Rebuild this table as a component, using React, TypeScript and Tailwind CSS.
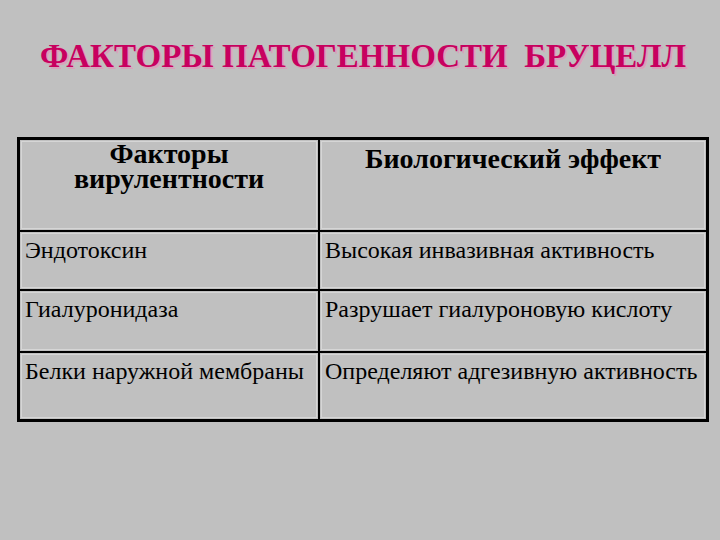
const rows: [string, string][] = [
  ["Эндотоксин", "Высокая инвазивная активность"],
  ["Гиалуронидаза", "Разрушает гиалуроновую кислоту"],
  ["Белки наружной мембраны", "Определяют адгезивную активность"],
];

const heights = ["h-[59px]", "h-[62px]", "h-[66px]"];

function Cell({ children, className = "" }: { children: React.ReactNode; className?: string }) {
  return (
    <div className={"p-[1px] " + className}>
      <div className="h-full border border-[#d6d6d6]">{children}</div>
    </div>
  );
}

export default function App() {
  return (
    <div className="w-[720px] h-[540px] bg-[#c0c0c0] font-[family-name:Liberation_Serif,DejaVu_Serif,serif] text-black overflow-hidden">
      <h1 className="pt-[36px] pl-[6px] text-center text-[33px] leading-[40px] font-bold text-[#c8005f] [text-shadow:2px_2px_0_#d8a2bb]">
        ФАКТОРЫ ПАТОГЕННОСТИ&nbsp; БРУЦЕЛЛ
      </h1>

      <div className="mt-[61px] ml-[17px] w-[692px] border-[3px] border-black">
        <div className="flex h-[92px] border-b-2 border-black">
          <Cell className="w-[300px] border-r-2 border-black">
            <div className="-mt-[1px] text-center text-[28px] leading-[25px] font-bold">
              Факторы
              <br />
              вирулентности
            </div>
          </Cell>
          <Cell className="flex-1">
            <div className="pt-[1px] text-center text-[28px] leading-[32px] font-bold">Биологический эффект</div>
          </Cell>
        </div>
        {rows.map(([a, b], i) => (
          <div key={a} className={"flex " + heights[i] + (i < rows.length - 1 ? " border-b-2 border-black" : "")}>
            <Cell className="w-[300px] border-r-2 border-black">
              <div className="pl-[3px] pt-[3px] text-[24px] leading-[27px] whitespace-nowrap">{a}</div>
            </Cell>
            <Cell className="flex-1">
              <div className="pl-[3px] pt-[3px] text-[24px] leading-[27px] whitespace-nowrap">{b}</div>
            </Cell>
          </div>
        ))}
      </div>
    </div>
  );
}
